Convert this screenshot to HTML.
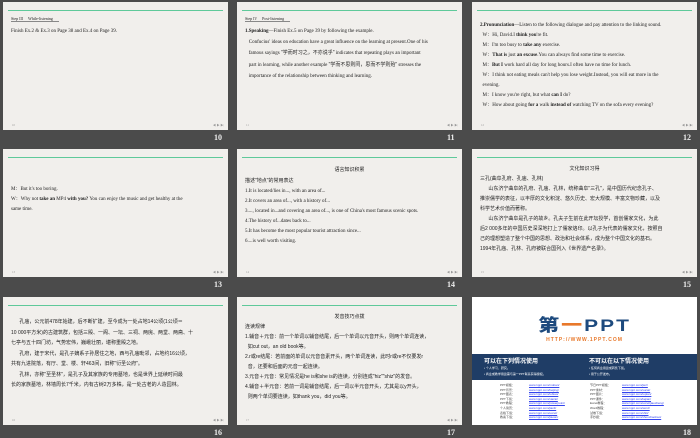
<!DOCTYPE html>
<html><head><meta charset="utf-8"><style>
*{margin:0;padding:0;box-sizing:border-box}
body{width:700px;height:438px;background:#4b4b4b;position:relative;overflow:hidden;font-family:"Liberation Serif","Noto Serif CJK SC",serif;color:#222}
.s{position:absolute;width:225px;height:128px;background:#f1efec;overflow:hidden}
.s .g{position:absolute;left:5px;right:5px;top:8px;height:1px;background:#5fc99a}
.s .t{position:absolute;left:8px;right:8px;font-size:5px;line-height:10px;white-space:nowrap}
.s .pn{position:absolute;left:9px;bottom:3px;font-size:3px;color:#999}
.s .nv{position:absolute;right:4px;bottom:3px;font-size:3px;color:#999}
.n{position:absolute;color:#eee;font:bold 8px "Liberation Serif",serif}
.cj{font-family:"Liberation Sans","Noto Sans CJK SC",sans-serif}
b{font-weight:bold}
</style></head><body>

<div class="s" style="left:3px;top:2px"><div class="g"></div>
<div class="t" style="top:12px;font-size:4px"><span style="border-bottom:0.5px solid #888;padding-right:6px">Step Ⅲ &nbsp;&nbsp;&nbsp; While-listening</span></div>
<div class="t" style="top:25px">Finish Ex.2 &amp; Ex.3 on Page 38 and Ex.4 on Page 39.</div>
<div class="pn">10</div><div class="nv">◀ ▶ ▶|</div></div>
<div class="n" style="left:214px;top:133px">10</div>

<div class="s" style="left:237px;top:2px"><div class="g"></div>
<div class="t" style="top:12px;font-size:4px"><span style="border-bottom:0.5px solid #888;padding-right:6px">Step Ⅳ &nbsp;&nbsp;&nbsp; Post-listening</span></div>
<div class="t" style="top:25px;line-height:10.7px"><b>1.Speaking</b>—Finish Ex.5 on Page 39 by following the example.<br>
&nbsp;&nbsp;&nbsp;Confucius' ideas on education have a great influence on the learning at present.One of his<br>
&nbsp;&nbsp;&nbsp;famous sayings <span class="cj">"学而时习之，不亦说乎"</span> indicates that repeating plays an important<br>
&nbsp;&nbsp;&nbsp;part in learning, while another example <span class="cj">"学而不思则罔，思而不学则殆"</span> stresses the<br>
&nbsp;&nbsp;&nbsp;importance of the relationship between thinking and learning.</div>
<div class="pn">11</div><div class="nv">◀ ▶ ▶|</div></div>
<div class="n" style="left:447px;top:133px">11</div>

<div class="s" style="left:472px;top:2px"><div class="g"></div>
<div class="t" style="top:19px"><b>2.Pronunciation</b>—Listen to the following dialogue and pay attention to the linking sound.<br>
&nbsp;&nbsp;W：Hi, David.I <b>think you</b>'re fit.<br>
&nbsp;&nbsp;M：I'm too busy to <b>take any</b> exercise.<br>
&nbsp;&nbsp;W：<b>That is</b> just <b>an excuse</b>.You can always find some time to exercise.<br>
&nbsp;&nbsp;M：<b>But I</b> work hard all day for long hours.I often have no time for lunch.<br>
&nbsp;&nbsp;W：I think not eating meals can't help you lose weight.Instead, you will eat more in the<br>
&nbsp;&nbsp;evening.<br>
&nbsp;&nbsp;M：I know you're right, but what <b>can I</b> do?<br>
&nbsp;&nbsp;W：How about going <b>for a</b> walk <b>instead of</b> watching TV on the sofa every evening?</div>
<div class="pn">12</div><div class="nv">◀ ▶ ▶|</div></div>
<div class="n" style="left:683px;top:133px">12</div>

<div class="s" style="left:3px;top:149px"><div class="g"></div>
<div class="t" style="top:36px">M：But it's too boring.<br>W：Why not <b>take an</b> MP4 <b>with you?</b> You can enjoy the music and get healthy at the<br>same time.</div>
<div class="pn">13</div><div class="nv">◀ ▶ ▶|</div></div>
<div class="n" style="left:214px;top:280px">13</div>

<div class="s" style="left:237px;top:149px"><div class="g"></div>
<div class="t cj" style="top:16px;text-align:center;left:0;right:0">语言知识积累</div>
<div class="t" style="top:27px;line-height:10px"><span class="cj">描述"地点"的常用表达</span><br>
1.It is located/lies in..., with an area of...<br>
2.It covers an area of..., with a history of...<br>
3...., located in...and covering an area of..., is one of China's most famous scenic spots.<br>
4.The history of...dates back to...<br>
5.It has become the most popular tourist attraction since...<br>
6....is well worth visiting.</div>
<div class="pn">14</div><div class="nv">◀ ▶ ▶|</div></div>
<div class="n" style="left:447px;top:280px">14</div>

<div class="s" style="left:472px;top:149px"><div class="g"></div>
<div class="t cj" style="top:15px;text-align:center;left:0;right:0">文化知识习得</div>
<div class="t cj" style="top:25px;line-height:10px">三孔(曲阜孔府、孔庙、孔林)<br>
&nbsp;&nbsp;&nbsp;&nbsp;&nbsp;&nbsp;山东济宁曲阜的孔府、孔庙、孔林，统称曲阜"三孔"，是中国历代纪念孔子、<br>
推崇儒学的表征，以丰厚的文化积淀、悠久历史、宏大规模、丰富文物珍藏，以及<br>
科学艺术价值而著称。<br>
&nbsp;&nbsp;&nbsp;&nbsp;&nbsp;&nbsp;山东济宁曲阜是孔子的故乡。孔夫子生前在此开坛授学，首创儒家文化，为此<br>
后2 000多年的中国历史深深地打上了儒家烙印。以孔子为代表的儒家文化，按照自<br>
己的理想塑造了整个中国的思想、政治和社会体系，成为整个中国文化的基石。<br>
1994年孔庙、孔林、孔府被联合国列入《世界遗产名录》。</div>
<div class="pn">15</div><div class="nv">◀ ▶ ▶|</div></div>
<div class="n" style="left:683px;top:280px">15</div>

<div class="s" style="left:3px;top:297px"><div class="g"></div>
<div class="t cj" style="top:20px;line-height:10.5px">&nbsp;&nbsp;&nbsp;&nbsp;&nbsp;&nbsp;孔庙，公元前478年始建，后不断扩建，至今成为一处占地14公顷(1公顷＝<br>
10 000平方米)的古建筑群，包括三殿、一阁、一坛、三祠、两庑、两堂、两斋、十<br>
七亭与五十四门坊，气势宏伟，巍峨壮丽，堪称重殿之地。<br>
&nbsp;&nbsp;&nbsp;&nbsp;&nbsp;&nbsp;孔府，建于宋代，是孔子嫡系子孙居住之地，西与孔庙毗邻，占地约16公顷，<br>
共有九进院落，有厅、堂、楼、轩463间，旧称"衍圣公府"。<br>
&nbsp;&nbsp;&nbsp;&nbsp;&nbsp;&nbsp;孔林，亦称"至圣林"，是孔子及其家族的专用墓地，也是世界上延续时间最<br>
长的家族墓地，林墙周长7千米，内有古树2万多株，是一处古老的人造园林。</div>
<div class="pn">16</div><div class="nv">◀ ▶ ▶|</div></div>
<div class="n" style="left:214px;top:428px">16</div>

<div class="s" style="left:237px;top:297px"><div class="g"></div>
<div class="t cj" style="top:15px;text-align:center;left:0;right:0">发音技巧点拨</div>
<div class="t cj" style="top:25px;line-height:10px">连读规律<br>
1.辅音＋元音：前一个单词以辅音结尾，后一个单词以元音开头，则两个单词连读，<br>
&nbsp;&nbsp;如cut out，an old book等。<br>
2.r或re结尾：若前面的单词以元音音素开头，两个单词连读，此时r或re不仅要发r<br>
&nbsp;&nbsp;音，还要和后面的元音一起连读。<br>
3.元音＋元音：常见情况是he is和she is的连读，分别连成"hiz""shiz"的发音。<br>
4.辅音＋半元音：若前一词是辅音结尾，后一词以半元音开头，尤其是以y开头，<br>
&nbsp;&nbsp;则两个单词要连读，如thank you，did you等。</div>
<div class="pn">17</div><div class="nv">◀ ▶ ▶|</div></div>
<div class="n" style="left:447px;top:428px">17</div>

<div class="s" style="left:472px;top:297px;background:#fff">
<div style="position:absolute;left:50px;top:18px;width:125px;text-align:center;font:900 21px 'Liberation Sans','Noto Sans CJK SC',sans-serif;color:#1d4a7e;letter-spacing:2px;line-height:22px;transform:scaleY(0.8)">第<span style="color:#e8782a">一</span>PPT</div>
<div style="position:absolute;left:0;right:0;top:40px;text-align:center;font:bold 5px 'Liberation Sans',sans-serif;color:#e8782a;letter-spacing:1px">HTTP://WWW.1PPT.COM</div>
<div style="position:absolute;left:0;right:0;top:57px;height:26px;background:#1f3d66;color:#fff;font-family:'Liberation Sans','Noto Sans CJK SC',sans-serif">
<div style="position:absolute;left:12px;top:2px;font-size:6px;font-weight:bold">可以在下列情况使用</div>
<div style="position:absolute;left:12px;top:11px;font-size:3px;line-height:6px">• 个人学习、研究。<br>• 商业或教学用途需与第一PPT联系获得授权。</div>
<div style="position:absolute;left:117px;top:2px;font-size:6px;font-weight:bold">不可以在以下情况使用</div>
<div style="position:absolute;left:117px;top:11px;font-size:3px;line-height:6px">• 任何商业用途或转售下载。<br>• 用于公开发布。</div></div>
<div style="position:absolute;left:28px;top:86px;font:3px/4.6px 'Liberation Sans','Noto Sans CJK SC',sans-serif;color:#444">PPT模板：<br>PPT背景：<br>PPT图表：<br>PPT下载：<br>PPT教程：<br>个人简历：<br>表格下载：<br>教案下载：</div>
<div style="position:absolute;left:57px;top:86px;font:3px/4.6px 'Liberation Sans',sans-serif;color:#3344ee;text-decoration:underline">www.1ppt.com/moban/<br>www.1ppt.com/beijing/<br>www.1ppt.com/tubiao/<br>www.1ppt.com/xiazai/<br>www.1ppt.com/powerpoint/<br>www.1ppt.com/jianli/<br>www.1ppt.com/excel/<br>www.1ppt.com/jiaoan/</div>
<div style="position:absolute;left:118px;top:86px;font:3px/4.6px 'Liberation Sans','Noto Sans CJK SC',sans-serif;color:#444">节日PPT模板：<br>PPT素材：<br>PPT图片：<br>PPT课件：<br>Excel教程：<br>Word教程：<br>试卷下载：<br>手抄报：</div>
<div style="position:absolute;left:150px;top:86px;font:3px/4.6px 'Liberation Sans',sans-serif;color:#3344ee;text-decoration:underline">www.1ppt.com/jieri/<br>www.1ppt.com/sucai/<br>www.1ppt.com/tupian/<br>www.1ppt.com/kejian/<br>www.1ppt.com/excel/jiaocheng/<br>www.1ppt.com/word/<br>www.1ppt.com/shiti/<br>www.1ppt.com/shouchaobao/</div>
</div>
<div class="n" style="left:683px;top:428px">18</div>
</body></html>
